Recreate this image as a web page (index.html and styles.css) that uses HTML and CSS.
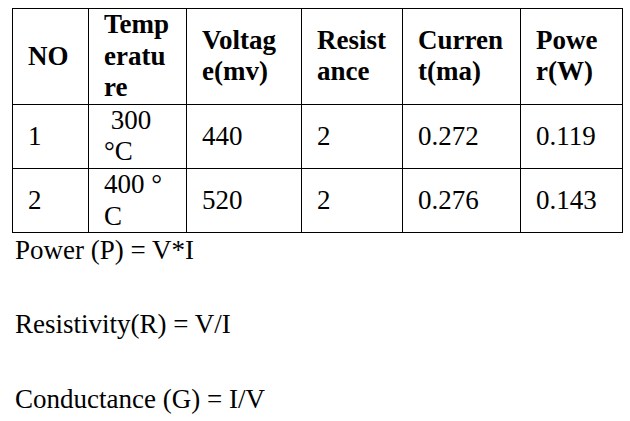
FILE: index.html
```html
<!DOCTYPE html>
<html lang="en">
<head>
<meta charset="utf-8">
<title>Measurements</title>
<link rel="stylesheet" href="styles.css">
</head>
<body>
<main class="page">
  <table class="data">
    <colgroup>
      <col class="c-no">
      <col class="c-temp">
      <col class="c-volt">
      <col class="c-res">
      <col class="c-cur">
      <col class="c-pow">
    </colgroup>
    <thead>
      <tr>
        <th>NO</th>
        <th>Temp<br>eratu<br>re</th>
        <th>Voltag<br>e(mv)</th>
        <th>Resist<br>ance</th>
        <th>Curren<br>t(ma)</th>
        <th>Powe<br>r(W)</th>
      </tr>
    </thead>
    <tbody>
      <tr>
        <td>1</td>
        <td>&nbsp;300<br>°C</td>
        <td>440</td>
        <td>2</td>
        <td>0.272</td>
        <td>0.119</td>
      </tr>
      <tr>
        <td>2</td>
        <td>400 °<br>C</td>
        <td>520</td>
        <td>2</td>
        <td>0.276</td>
        <td>0.143</td>
      </tr>
    </tbody>
  </table>
  <div class="notes">
    <p class="formula">Power (P) = V*I</p>
    <p class="formula">Resistivity(R) = V/I</p>
    <p class="formula">Conductance (G) = I/V</p>
  </div>
</main>
</body>
</html>
```

FILE: styles.css
```css
html, body {
  margin: 0;
  padding: 0;
  background: #ffffff;
  color: #000000;
  font-family: "Liberation Serif", "Times New Roman", serif;
}

.page {
  padding: 8px 0 0 12px;
}

.data {
  border-collapse: collapse;
  table-layout: fixed;
  width: 610px;
  font-size: 27px;
  line-height: 31.6px;
}

.c-no { width: 76px; }
.c-temp { width: 98px; }
.c-volt { width: 115px; }
.c-res { width: 101px; }
.c-cur { width: 118px; }
.c-pow { width: 102px; }

.data th,
.data td {
  border: 1px solid #000000;
  padding: 0 4px 0 15px;
  text-align: left;
  vertical-align: middle;
  white-space: nowrap;
}

.data th {
  font-weight: bold;
}

.data td {
  font-weight: normal;
}

.notes {
  display: flex;
  flex-direction: column;
  gap: 42.3px;
  padding: 1px 0 0 3px;
}

.formula {
  margin: 0;
  font-size: 27px;
  line-height: 32px;
}
```
